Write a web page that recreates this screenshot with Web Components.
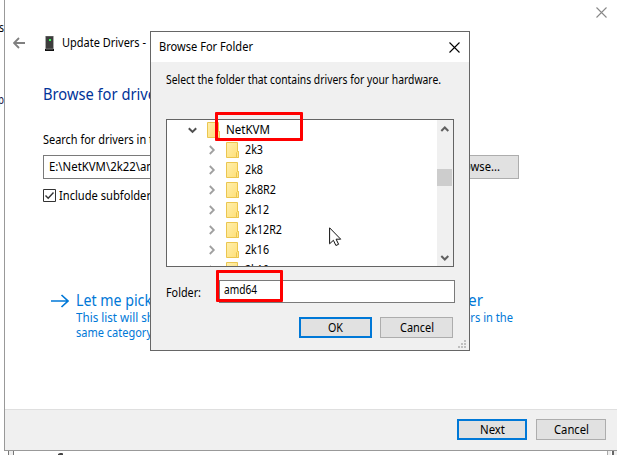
<!DOCTYPE html>
<html lang="en"><head><meta charset="utf-8"><title>Update Drivers</title>
<style>
html,body{margin:0;width:617px;height:455px;overflow:hidden;background:#fff}
body{font:12px/16px "Noto Sans","Open Sans",sans-serif;color:#000}
</style></head><body>
<driver-desktop></driver-desktop>
<script>
const define=(name,html,setup)=>{
  const t=document.createElement('template');t.innerHTML=html;
  customElements.define(name,class extends HTMLElement{
    constructor(){super();this.attachShadow({mode:'open'}).append(t.content.cloneNode(true));}
    connectedCallback(){if(setup)setup(this,this.shadowRoot);}
  });
};

// A single line of text condensed to the width given in "w".
define('ui-text',`<style>:host{display:block;white-space:nowrap;flex:none}span{display:inline-block;transform-origin:0 0}</style><span><slot></slot></span>`,
(h,r)=>{const s=r.querySelector('span'),w=+h.getAttribute('w');h.style.width=w+'px';
  const n=s.getBoundingClientRect().width;if(n&&w)s.style.transform='scaleX('+w/n+')';});

define('ui-button',`<style>:host{display:flex;box-sizing:border-box;align-items:center;justify-content:center;width:73px;height:21px;border:1px solid #adadad;background:#e1e1e1;flex:none}
:host([primary]){border:2px solid #0078d7}</style><slot></slot>`);

define('ui-close',`<style>:host{display:block;width:11px;height:11px;flex:none}svg{display:block}</style>
<svg width="11" height="11" viewBox="0 0 11 11" fill="none" stroke="currentColor" stroke-width="1.1"><path d="M.5.5l10 10M10.5.5l-10 10"/></svg>`);

define('tree-row',`<style>:host{display:flex;height:20px;align-items:center;box-sizing:border-box;padding-left:40px;flex:none}
:host([root]){padding-left:20px}
.c{width:12px;height:12px;margin-right:7px;color:#a0a0a0;flex:none}.d{display:none;color:#505050}
:host([root]) .c{display:none}:host([root]) .d{display:block}
.f{width:13px;height:16px;margin-right:6px;flex:none}
:host([root]) .f{margin-left:1px}</style>
<svg class="c" viewBox="0 0 12 12" fill="none" stroke="currentColor" stroke-width="1.8"><path d="M2.8 2L6.8 6l-4 4"/></svg>
<svg class="c d" viewBox="0 0 12 12" fill="none" stroke="currentColor" stroke-width="2"><path d="M1.800 4.200l3.700 3.700 3.700-3.700"/></svg>
<svg class="f" viewBox="0 0 13 16"><defs><linearGradient id="g" x2="1" y2="1"><stop stop-color="#ffefad"/><stop offset="1" stop-color="#ffdf75"/></linearGradient></defs><path d="M.5.5h11v9h1v6H.5z" fill="url(#g)" stroke="#ebc650"/><path d="M10.5 15.5v-5l1-1h1v6z" fill="#ffe68b" stroke="#ebc650"/></svg>
<slot></slot>`);

define('scroll-bar',`<style>:host{display:flex;flex-direction:column;width:16px;background:#f0f0f0;flex:none}
svg{display:block;width:16px;height:17px;flex:none}.t{width:15px;height:17px;background:#cdcdcd;margin-top:32px}.s{flex:1}</style>
<svg viewBox="0 0 16 17" fill="none" stroke="#606060" stroke-width="2"><path d="M4.300 11l3.500-3.500L11.300 11"/></svg><div class="t"></div><div class="s"></div>
<svg viewBox="0 0 16 17" fill="none" stroke="#606060" stroke-width="2"><path d="M4.300 7l3.500 3.500L11.300 7"/></svg>`);

define('folder-tree',`<style>:host{display:flex;box-sizing:border-box;width:288px;height:148px;border:1px solid #646464;background:#fff;overflow:hidden}
.r{flex:1;overflow:hidden}</style><div class="r"><slot></slot></div><scroll-bar></scroll-bar>`);

define('folder-dialog',`<style>
:host{display:flex;flex-direction:column;box-sizing:border-box;width:320px;height:320px;border:1px solid #666;background:#f0f0f0}
.title{display:flex;height:30px;background:#fff;align-items:center;justify-content:space-between;padding:0 9px 0 8px;box-sizing:border-box;flex:none}
.body{padding:10px 0 0 15px;display:flex;flex-direction:column;flex:1}
folder-tree{margin-top:31px}
.field{display:flex;margin-top:13px;height:23px;align-items:center}
.field>ui-text{margin-top:3px}
.input{box-sizing:border-box;display:flex;align-items:center;width:236px;height:23px;border:1px solid #7a7a7a;background:#fff;padding:0 0 3px 4px;margin-left:18px}
.buttons{display:flex;gap:8px;margin:14px 0 0 133px}
.grip{width:8px;height:8px;align-self:flex-end;margin:2px 3px 0 0}
</style>
<div class="title"><ui-text w="94">Browse For Folder</ui-text><ui-close></ui-close></div>
<div class="body"><ui-text w="275">Select the folder that contains drivers for your hardware.</ui-text>
<folder-tree><tree-row root><ui-text w="44">NetKVM</ui-text></tree-row>
<tree-row><ui-text w="18">2k3</ui-text></tree-row><tree-row><ui-text w="18">2k8</ui-text></tree-row><tree-row><ui-text w="31">2k8R2</ui-text></tree-row><tree-row><ui-text w="24">2k12</ui-text></tree-row><tree-row><ui-text w="37">2k12R2</ui-text></tree-row><tree-row><ui-text w="24">2k16</ui-text></tree-row><tree-row><ui-text w="24">2k19</ui-text></tree-row></folder-tree>
<div class="field"><ui-text w="35">Folder:</ui-text><div class="input"><ui-text w="33">amd64</ui-text></div></div>
<div class="buttons"><ui-button primary><ui-text w="15">OK</ui-text></ui-button><ui-button><ui-text w="34">Cancel</ui-text></ui-button></div>
<svg class="grip" viewBox="0 0 8 8" fill="#bfbfbf"><path d="M6 0h2v2H6zM3 3h2v2H3zM6 3h2v2H6zM0 6h2v2H0zM3 6h2v2H3zM6 6h2v2H6z"/></svg></div>`);

define('driver-wizard',`<style>
:host{display:flex;flex-direction:column;box-sizing:border-box;width:613px;height:451px;margin-left:4px;border:solid #999;border-width:0 0 1px 1px;background:#fff;overflow:hidden}
.top{display:flex;justify-content:flex-end;padding:7px 10px 0 0;height:11px;color:#888;flex:none}
.head{display:flex;height:16px;margin-top:17px;padding-left:8px;align-items:center;flex:none}
.back{width:12px;height:12px}.drive{width:9px;height:15px;margin:0 8px 0 20px}
.main{flex:1;display:flex;flex-direction:column}
h1{margin:32px 0 0 38px;font:17px/23px "Noto Sans",sans-serif;color:#039;width:112px;height:20px}
h1 ui-text{margin-top:-1px}
.row{display:flex;height:25px;align-items:center;margin:6px 0 0 38px}
.in{box-sizing:border-box;width:120px;height:24px;border:1px solid #7a7a7a;padding:3px 0 0 5px}
.row ui-button{width:79px;height:24px;justify-content:flex-end;padding-right:18px;margin-left:277px;margin-top:1px}
.check{display:flex;margin:8px 0 0 38px;height:16px;align-items:center;gap:3px}
.check svg{flex:none}.check ui-text{margin-top:2px}
.link{display:flex;margin:87px 0 0 46px;color:#0078d7;height:54px}
.arrow{width:18px;height:14px;margin:4px 7px 0 0;flex:none}
.left{width:75px;flex:none;padding-top:1px}.right{margin-left:317px;padding-top:1px}
.big{font-size:15.500px;line-height:19px;height:19px}
.small{line-height:15px}
footer{box-sizing:border-box;height:41px;background:#f0f0f0;border-top:1px solid #dfdfdf;padding:9px 11px 0 0;display:flex;gap:9px;justify-content:flex-end;flex:none}
footer ui-button{width:70px}
</style>
<div class="top"><ui-close></ui-close></div>
<div class="head"><svg class="back" viewBox="0 0 12 12" fill="none" stroke="#808080" stroke-width="1.8"><path d="M12 6H1M6 1L1 6l5 5"/></svg>
<svg class="drive" viewBox="0 0 9 15"><path d="M1 0h7v13H1z" fill="#3c3c3c"/><path d="M.5 0v13M8.5 0v13" stroke="#aaa"/><path d="M1 0h7" stroke="#777"/><path d="M4 3h2v2H4z" fill="#3f5"/><path d="M0 13h9v2H0z" fill="#111"/><path d="M1 13h7" stroke="#888" stroke-width=".8"/></svg><ui-text w="84">Update Drivers -</ui-text></div>
<div class="main"><h1><ui-text w="113">Browse for drive</ui-text></h1>
<ui-text w="110" style="margin:29px 0 0 38px">Search for drivers in t</ui-text>
<div class="row"><div class="in"><ui-text w="108">E:\\NetKVM\\2k22\\am</ui-text></div><ui-button><ui-text w="36">owse...</ui-text></ui-button></div>
<div class="check"><svg width="13" height="13" viewBox="0 0 13 13" fill="none" stroke="#333"><path d="M.5.5h12v12H.5z"/><path d="M2.500 6.500l2.700 2.800 5.300-5.800" stroke-width="1.4"/></svg><ui-text w="92">Include subfolder</ui-text></div>
<div class="link"><svg class="arrow" viewBox="0 0 18 14" fill="none" stroke="currentColor" stroke-width="1.7"><path d="M0 7h17M10.500 1L17 7l-6.500 6"/></svg>
<div class="left"><ui-text class="big" w="76">Let me pick</ui-text><ui-text class="small" w="78">This list will sh</ui-text><ui-text class="small" w="76">same category</ui-text></div>
<div class="right"><ui-text class="big" w="15">er</ui-text><ui-text class="small" style="margin-left:-4px" w="49">ers in the</ui-text></div></div></div>
<footer><ui-button primary><ui-text w="25">Next</ui-text></ui-button><ui-button><ui-text w="35">Cancel</ui-text></ui-button></footer>`);

define('driver-desktop',`<style>
:host{display:block;position:relative;width:617px;height:455px;overflow:hidden}
.back{position:absolute;left:0;width:4px;overflow:hidden}.back ui-text{float:right}
.beneath{display:flex;height:4px}.beneath i{display:block;height:4px;box-sizing:border-box}
folder-dialog{position:absolute;left:150px;top:31px}
.mark{position:absolute;box-sizing:border-box;border:3px solid #f00;border-radius:1px}
.cursor{position:absolute;left:329px;top:227px;width:13px;height:19px}
</style><driver-wizard></driver-wizard>
<div class="back" style="top:20px"><ui-text w="5">s</ui-text></div><div class="back" style="top:92px;color:#201040"><ui-text w="6">p</ui-text></div>
<div class="beneath"><i style="width:6px;margin-left:8px;border:solid #777;border-width:0 1px;background:#eee"></i><svg width="6" height="4" style="margin-left:44px"><path d="M0 4V3l2-1h2l2 1v1z" fill="#444"/></svg><i style="width:4px;margin-left:544px;background:#eee;border-left:1px solid #aaa"></i><i style="width:2px;background:#666;margin-left:1px"></i><i style="width:3px;background:#eee"></i></div>
<folder-dialog></folder-dialog>
<div class="mark" style="left:215px;top:112px;width:88px;height:29px"></div><div class="mark" style="left:216px;top:270px;width:67px;height:32px"></div>
<svg class="cursor" viewBox="0 0 13 19"><path d="M.6.8v16l3.800-3.500 2.500 5.200 2.700-1.200-2.500-5.100h4.600z" fill="#fff" stroke="#111" stroke-width="1"/></svg>`);
</script></body></html>
